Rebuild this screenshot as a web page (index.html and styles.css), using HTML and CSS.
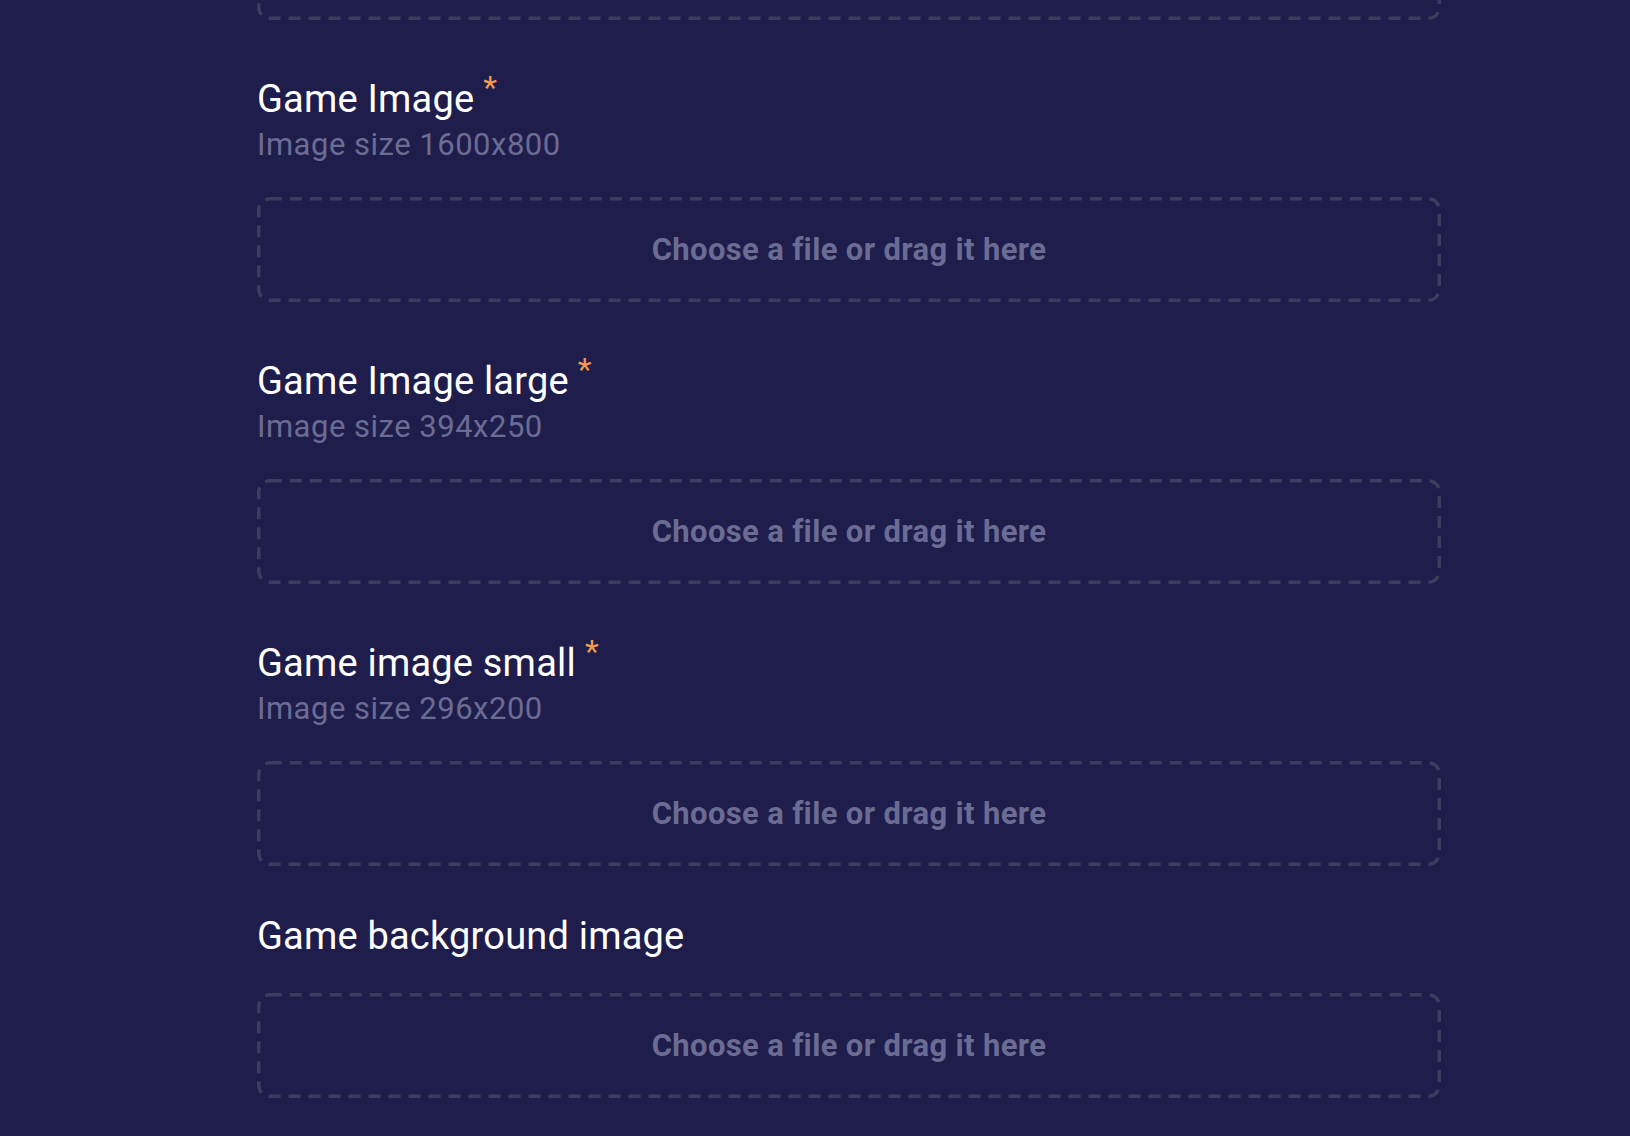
FILE: index.html
```html
<!DOCTYPE html>
<html>
<head>
<meta charset="utf-8">
<link rel="stylesheet" href="styles.css">
</head>
<body>
<div class="form">
  <div class="drop drop-cut"></div>

  <div class="field">
    <div class="label">Game Image<span class="req">*</span></div>
    <div class="hint">Image size 1600x800</div>
    <div class="drop"><span class="drop-text">Choose a file or drag it here</span></div>
  </div>

  <div class="field">
    <div class="label">Game Image large<span class="req">*</span></div>
    <div class="hint">Image size 394x250</div>
    <div class="drop"><span class="drop-text">Choose a file or drag it here</span></div>
  </div>

  <div class="field">
    <div class="label">Game image small<span class="req">*</span></div>
    <div class="hint">Image size 296x200</div>
    <div class="drop"><span class="drop-text">Choose a file or drag it here</span></div>
  </div>

  <div class="field field-plain">
    <div class="label">Game background image</div>
    <div class="drop"><span class="drop-text">Choose a file or drag it here</span></div>
  </div>
</div>
</body>
</html>
```
FILE: styles.css
```css
html, body {
  margin: 0;
  padding: 0;
  background: #1e1d4b;
  height: 100%;
  overflow: hidden;
}
body {
  font-family: Roboto, "Liberation Sans", sans-serif;
}
.form {
  width: 1184px;
  margin-left: 257px;
  display: flex;
  flex-direction: column;
}
.field {
  display: flex;
  flex-direction: column;
  margin-top: 56px;
}
.field-plain {
  margin-top: 47px;
}
.label {
  color: #ffffff;
  font-size: 38px;
  line-height: 46px;
  font-weight: 400;
  letter-spacing: 0.2px;
}
.req {
  color: #f39a4c;
  font-size: 32px;
  line-height: 30px;
  vertical-align: top;
  margin-left: 9px;
  position: relative;
  top: -4px;
}
.hint {
  color: #6b6c94;
  font-size: 31px;
  line-height: 38px;
  letter-spacing: 0.5px;
  margin-top: 4px;
}
.drop {
  margin-top: 33px;
  height: 105px;
  box-sizing: border-box;
  border-radius: 12px;
  background-image: url("data:image/svg+xml,%3Csvg xmlns='http://www.w3.org/2000/svg' width='100%25' height='100%25'%3E%3Crect x='1.75' y='1.75' width='calc(100%25 - 3.5px)' height='calc(100%25 - 3.5px)' rx='11' ry='11' fill='none' stroke='%233c3c5e' stroke-width='3.5' stroke-dasharray='12 8'/%3E%3C/svg%3E");
  display: flex;
  align-items: center;
  justify-content: center;
}
.field-plain .drop {
  margin-top: 34px;
}
.drop-cut {
  margin-top: -85px;
}
.drop-text {
  color: #6b6c94;
  font-size: 31px;
  font-weight: 700;
  letter-spacing: 0.35px;
}
```
